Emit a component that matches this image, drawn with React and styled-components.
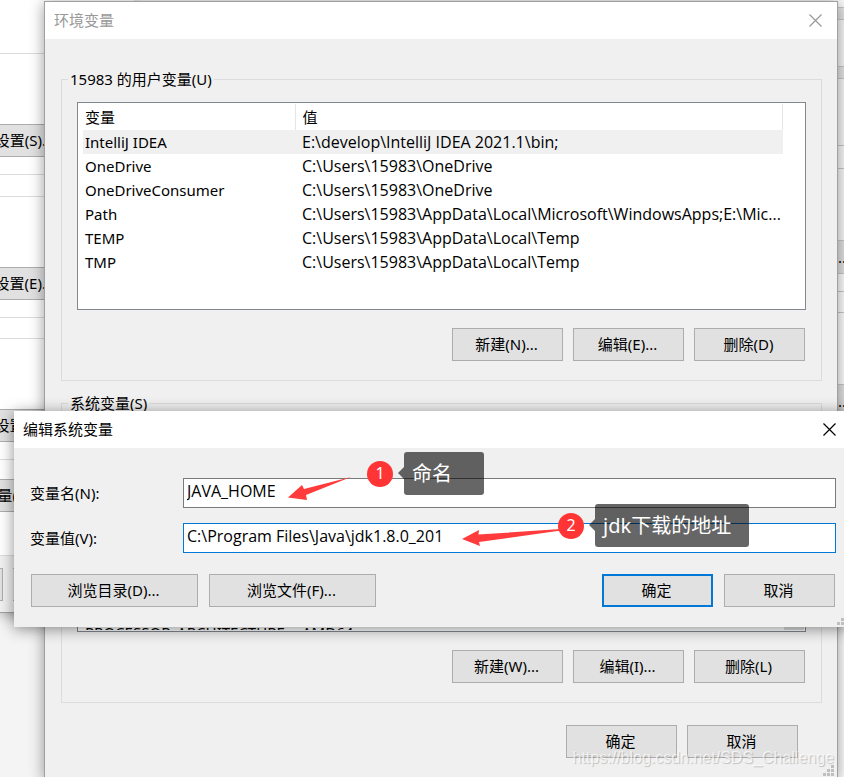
import styled, { createGlobalStyle } from "styled-components";

const userVariables = [
  ["IntelliJ IDEA", "E:\\develop\\IntelliJ IDEA 2021.1\\bin;"],
  ["OneDrive", "C:\\Users\\15983\\OneDrive"],
  ["OneDriveConsumer", "C:\\Users\\15983\\OneDrive"],
  ["Path", "C:\\Users\\15983\\AppData\\Local\\Microsoft\\WindowsApps;E:\\Mic..."],
  ["TEMP", "C:\\Users\\15983\\AppData\\Local\\Temp"],
  ["TMP", "C:\\Users\\15983\\AppData\\Local\\Temp"],
];

const CloseIcon = () => (
  <svg width="13" height="13" viewBox="0 0 13 13" stroke="currentColor" strokeWidth="1.2">
    <path d="M0.5 0.5L12.5 12.5M12.5 0.5L0.5 12.5" />
  </svg>
);

const Grip = () => (
  <GripSvg width="11" height="11" viewBox="0 0 11 11" fill="#bfbfbf">
    <path d="M8 0h3v3h-3zM4 4h3v3h-3zM8 4h3v3h-3zM0 8h3v3h-3zM4 8h3v3h-3zM8 8h3v3h-3z" />
  </GripSvg>
);

const SystemProperties = () => (
  <Properties>
    <PropertyPanel>
      <Rule $top={53} />
      <BackButton $top={70}>设置(S)...</BackButton>
      <Rule $top={17} />
      <Rule $top={21} />
      <BackButton $top={70}>设置(E)...</BackButton>
      <Rule $top={17} />
      <Rule $top={20} />
      <BackButton $top={70}>设置(T)...</BackButton>
      <Rule $top={17} />
      <BackButton $top={19} $long>
        环境变量(N)...
      </BackButton>
    </PropertyPanel>
    <PropertyFooter>
      <FooterStub />
      <FooterStub />
    </PropertyFooter>
  </Properties>
);

const EnvironmentWindow = () => (
  <EnvWindow>
    <TitleBar $inactive>
      <span>环境变量</span>
      <CloseButton aria-label="关闭">
        <CloseIcon />
      </CloseButton>
    </TitleBar>
    <EnvBody>
      <Group>
        <legend>15983 的用户变量(U)</legend>
        <ListBox>
          <VariableTable>
            <thead>
              <tr>
                <th>变量</th>
                <th>值</th>
              </tr>
            </thead>
            <tbody>
              {userVariables.map(([name, value], i) => (
                <Row key={name} $selected={i === 0}>
                  <td>{name}</td>
                  <td>{value}</td>
                </Row>
              ))}
            </tbody>
          </VariableTable>
        </ListBox>
        <Buttons>
          <Button>新建(N)...</Button>
          <Button>编辑(E)...</Button>
          <Button>删除(D)</Button>
        </Buttons>
      </Group>
      <Group>
        <legend>系统变量(S)</legend>
        <ListBox $end>
          <LastRow>
            <span>PROCESSOR_ARCHITECTURE</span>
            <span>AMD64</span>
          </LastRow>
          <ScrollEnd />
        </ListBox>
        <Buttons>
          <Button>新建(W)...</Button>
          <Button>编辑(I)...</Button>
          <Button>删除(L)</Button>
        </Buttons>
      </Group>
      <EnvFooter>
        <Button>确定</Button>
        <Button>取消</Button>
      </EnvFooter>
    </EnvBody>
    <Grip />
  </EnvWindow>
);

const EditDialog = () => (
  <Dialog>
    <TitleBar>
      <span>编辑系统变量</span>
      <CloseButton aria-label="关闭">
        <CloseIcon />
      </CloseButton>
    </TitleBar>
    <Form>
      <Field>
        <label htmlFor="name">变量名(N):</label>
        <input id="name" defaultValue="JAVA_HOME" spellCheck="false" />
      </Field>
      <Field $active>
        <label htmlFor="value">变量值(V):</label>
        <input id="value" defaultValue="C:\Program Files\Java\jdk1.8.0_201" spellCheck="false" />
      </Field>
      <FormButtons>
        <Button type="button" $wide>浏览目录(D)...</Button>
        <Button type="button" $wide>浏览文件(F)...</Button>
        <Spacer />
        <Button type="button" $primary>确定</Button>
        <Button type="button">取消</Button>
      </FormButtons>
    </Form>
    <Grip />
  </Dialog>
);

const App = () => {
  return (
    <Desktop>
      <GlobalStyle />
      <SystemProperties />
      <OtherWindow>
        <Strip $height={8} $color="#fafafa" />
        <Strip $height={12} $color="#e4e4e4" />
        <Strip $height={47} $color="#f6f6f6" />
        <Strip $height={12} $color="#e4e4e4" />
        <Strip $height={67} $color="#f6f6f6" />
        <Strip $height={23} $color="#f8f8f8" />
        <Strip $height={72} $color="#f8f8f8" />
        <Strip $height={33} $color="#e1e1e1">...</Strip>
        <Strip $height={18} $color="#fdfdfd" />
        <Strip $height={21} $color="#fdfdfd" />
        <Strip $height={72} $color="#fdfdfd" />
        <Strip $height={33} $color="#e1e1e1">...</Strip>
        <Strip $height={400} $color="#fdfdfd" />
      </OtherWindow>
      <EnvironmentWindow />
      <EditDialog />
      <Arrow $left={288} $top={476} width="64" height="26" viewBox="0 0 64 26">
        <path d="M0 21.500L14 9L16 13L63 1L18 19L19 24Z" />
      </Arrow>
      <Arrow $left={462} $top={525} width="100" height="22" viewBox="0 0 100 22">
        <path d="M0 14L17 5L16.500 9.500L99 4L99 5.500L17 17L18 21Z" />
      </Arrow>
      <Note $left={367} $top={452}>
        <Badge>1</Badge>
        <Bubble $width={80}>命名</Bubble>
      </Note>
      <Note $left={558} $top={504}>
        <Badge>2</Badge>
        <Bubble $width={154}>jdk下载的地址</Bubble>
      </Note>
      <Watermark>https://blog.csdn.net/SDS_Challenge</Watermark>
    </Desktop>
  );
};

const GlobalStyle = createGlobalStyle`
  * {
    box-sizing: border-box;
  }
  body {
    margin: 0;
  }
  body, button, input {
    font-family: "Noto Sans", "Noto Sans CJK SC", sans-serif;
    font-size: 15px;
    line-height: 24px;
    color: #000;
  }
`;

const Desktop = styled.main`
  position: relative;
  height: 100vh;
  overflow: hidden;
  background: #f4f4f4;
`;

const Properties = styled.section`
  width: 134px;
  background: #f0f0f0;
  border-bottom: 1px solid #a0a0a0;
  box-shadow: 0 2px 12px rgba(0, 0, 0, 0.35);
`;

const PropertyPanel = styled.div`
  display: flex;
  flex-direction: column;
  height: 556px;
  background: #fff;
  border-bottom: 1px solid #dcdcdc;
`;

const Rule = styled.div`
  height: 1px;
  margin-top: ${(props) => props.$top}px;
  background: #dcdcdc;
`;

const BackButton = styled.button`
  width: 64px;
  height: 33px;
  margin-top: ${(props) => props.$top}px;
  padding: 0 ${(props) => (props.$long ? 18 : 9)}px 2px 0;
  display: flex;
  justify-content: flex-end;
  align-items: center;
  overflow: hidden;
  white-space: nowrap;
  border: 1px solid #adadad;
  border-left: none;
  background: #e1e1e1;
`;

const PropertyFooter = styled.div`
  display: flex;
  gap: 10px;
  height: 56px;
  padding-top: 12px;
`;

const FooterStub = styled.div`
  width: 3px;
  height: 33px;
  border: 1px solid #adadad;
  border-left: none;
  background: #e1e1e1;
`;

const OtherWindow = styled.section`
  position: absolute;
  top: 0;
  right: 0;
  width: 10px;
`;

const Strip = styled.div`
  height: ${(props) => props.$height}px;
  padding-left: 4px;
  border-bottom: 1px solid #c8c8c8;
  background: ${(props) => props.$color};
  line-height: 32px;
`;

const EnvWindow = styled.section`
  position: absolute;
  top: 1px;
  left: 44px;
  right: 6px;
  border: 1px solid #a0a0a0;
  background: #f0f0f0;
  box-shadow: 0 2px 14px rgba(0, 0, 0, 0.4);
`;

const TitleBar = styled.header`
  display: flex;
  align-items: center;
  justify-content: space-between;
  height: 37px;
  padding: 0 15px 1px 9px;
  background: #fff;
  color: ${(props) => (props.$inactive ? "#999" : "#000")};
`;

const CloseButton = styled.button`
  display: flex;
  padding: 0;
  border: none;
  background: none;
  color: inherit;
`;

const EnvBody = styled.div`
  padding: 28px 15px 20px 16px;
`;

const Group = styled.fieldset`
  min-width: 0;
  margin: 0 0 10px;
  padding: 11px 15px 19px;
  border: 1px solid #dcdcdc;
  legend {
    margin-left: -9px;
    padding: 0 2px;
  }
`;

const ListBox = styled.div`
  position: relative;
  height: ${(props) => (props.$end ? 206 : 208)}px;
  padding: 1px 22px 0 5px;
  border: 1px solid #828790;
  background: #fff;
  overflow: hidden;
  ${(props) =>
    props.$end &&
    `
    display: flex;
    align-items: flex-end;
    padding-right: 1px;
    padding-bottom: 1px;
  `}
`;

const VariableTable = styled.table`
  width: 100%;
  table-layout: fixed;
  border-collapse: collapse;
  text-align: left;
  th,
  td {
    height: 24px;
    padding: 0 0 0 2px;
    overflow: hidden;
    white-space: nowrap;
    text-overflow: ellipsis;
  }
  th {
    height: 26px;
    font-weight: 400;
    border-right: 1px solid #e5e5e5;
  }
  th:first-child {
    width: 212px;
  }
  th + th,
  td + td {
    padding-left: 7px;
  }
  td + td {
    font-family: "Open Sans", sans-serif;
    font-size: 16px;
  }
`;

const Row = styled.tr`
  background: ${(props) => (props.$selected ? "#f0f0f0" : "#fff")};
`;

const LastRow = styled.div`
  display: flex;
  height: 10px;
  padding-left: 2px;
  overflow: hidden;
  span:first-child {
    width: 217px;
  }
`;

const ScrollEnd = styled.div`
  width: 20px;
  height: 20px;
  margin-left: auto;
  background: #dcdcdc;
`;

const Buttons = styled.div`
  display: flex;
  justify-content: flex-end;
  gap: 10px;
  margin-top: 18px;
  padding-right: 1px;
`;

const Button = styled.button`
  width: ${(props) => (props.$wide ? 167 : 111)}px;
  height: 33px;
  padding: 0 2px 2px 0;
  border: ${(props) => (props.$primary ? "2px solid #0078d7" : "1px solid #adadad")};
  background: #e1e1e1;
`;

const EnvFooter = styled.div`
  display: flex;
  justify-content: flex-end;
  gap: 10px;
  margin-top: 22px;
  padding-right: 24px;
`;

const GripSvg = styled.svg`
  position: absolute;
  right: 3px;
  bottom: 2px;
`;

const Dialog = styled.section`
  position: absolute;
  top: 411px;
  left: 14px;
  right: -4px;
  background: #f0f0f0;
  box-shadow: 0 2px 14px rgba(0, 0, 0, 0.45);
  ${TitleBar} {
    padding-right: 12px;
  }
  ${GripSvg} {
    right: 0;
  }
`;

const Form = styled.form`
  padding: 30px 12px 20px 16px;
`;

const Field = styled.div`
  display: flex;
  align-items: center;
  margin-bottom: 15px;
  label {
    width: 153px;
  }
  input {
    flex: 1;
    min-width: 0;
    height: 30px;
    padding: 0 3px 4px;
    border: 1px solid ${(props) => (props.$active ? "#0078d7" : "#7a7a7a")};
    background: #fff;
    outline: none;
    font-family: "Open Sans", sans-serif;
    font-size: 16px;
  }
`;

const FormButtons = styled.div`
  display: flex;
  gap: 11px;
  padding: 6px 1px 0;
`;

const Spacer = styled.div`
  flex: 1;
`;

const Arrow = styled.svg`
  position: absolute;
  top: ${(props) => props.$top}px;
  left: ${(props) => props.$left}px;
  fill: #ff3b3b;
`;

const Note = styled.div`
  position: absolute;
  top: ${(props) => props.$top}px;
  left: ${(props) => props.$left}px;
  display: flex;
  align-items: center;
  gap: 11px;
  color: #fff;
`;

const Badge = styled.span`
  width: 26px;
  height: 26px;
  border-radius: 50%;
  background: #ff3535;
  text-align: center;
  font-size: 16px;
  line-height: 24px;
`;

const Bubble = styled.div`
  position: relative;
  width: ${(props) => props.$width}px;
  height: 43px;
  padding: 0 8px;
  border-radius: 3px;
  background: rgba(0, 0, 0, 0.6);
  font-size: 20px;
  line-height: 43px;
  white-space: nowrap;
  &::before {
    content: "";
    position: absolute;
    top: 15px;
    right: 100%;
    border: solid transparent;
    border-width: 6px 6px 6px 0;
    border-right-color: rgba(0, 0, 0, 0.6);
  }
`;

const Watermark = styled.div`
  position: absolute;
  right: 10px;
  bottom: 7px;
  color: rgba(255, 255, 255, 0.7);
  font-family: "Liberation Sans", sans-serif;
  font-size: 16px;
  text-shadow: 1px 1px 1px rgba(0, 0, 0, 0.2);
`;

export default App;
